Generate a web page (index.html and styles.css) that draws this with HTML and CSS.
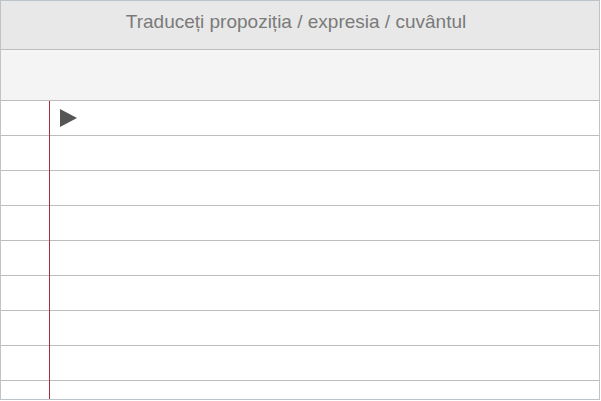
FILE: index.html
```html
<!DOCTYPE html>
<html>
<head>
<meta charset="utf-8">
<link rel="stylesheet" href="styles.css">
</head>
<body>
<div class="sheet">
  <div class="header">Traduceți propoziția / expresia / cuvântul</div>
  <div class="subheader"></div>
  <div class="paper">
    <div class="margin-line"></div>
    <div class="row"><span class="play"></span></div>
    <div class="row"></div>
    <div class="row"></div>
    <div class="row"></div>
    <div class="row"></div>
    <div class="row"></div>
    <div class="row"></div>
    <div class="row"></div>
    <div class="row last"></div>
  </div>
</div>
</body>
</html>
```
FILE: styles.css
```css
html, body {
  margin: 0;
  padding: 0;
  background: #ffffff;
}
.sheet {
  width: 600px;
  height: 400px;
  box-sizing: border-box;
  border: 1px solid #bcc3c9;
  display: flex;
  flex-direction: column;
  overflow: hidden;
  font-family: "Liberation Sans", Arial, sans-serif;
}
.header {
  height: 48px;
  flex: none;
  background: #e8e8e8;
  border-bottom: 1px solid #bdbdbd;
  color: #7a7a7a;
  font-size: 19px;
  text-align: center;
  line-height: 42px;
  padding-right: 8px;
}
.subheader {
  height: 50px;
  flex: none;
  background: #f4f4f4;
  border-bottom: 1px solid #bdbdbd;
}
.paper {
  position: relative;
  flex: 1;
  background: #fff;
}
.margin-line {
  position: absolute;
  left: 48px;
  top: 0;
  bottom: 0;
  width: 1px;
  background: #ab2e3c;
}
.row {
  height: 34px;
  border-bottom: 1px solid #bdbdbd;
  display: flex;
  align-items: center;
  padding-left: 59px;
}
.play {
  width: 0;
  height: 0;
  border-top: 9px solid transparent;
  border-bottom: 9px solid transparent;
  border-left: 17px solid #555;
  margin-top: -1px;
}
```
